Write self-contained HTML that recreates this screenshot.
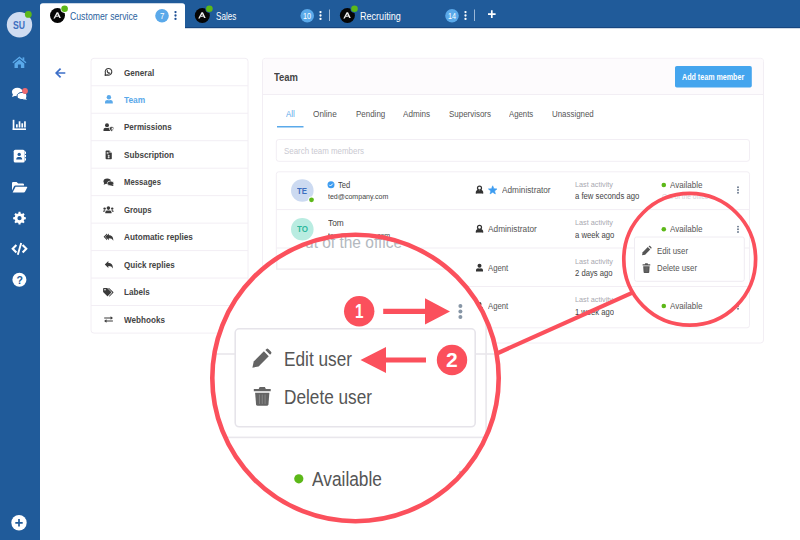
<!DOCTYPE html>
<html><head><meta charset="utf-8"><title>Team</title>
<style>
html,body{margin:0;padding:0;background:#fff;}
body{width:800px;height:540px;position:relative;overflow:hidden;font-family:'Liberation Sans',sans-serif;}
svg{position:absolute;left:0;top:0;}
.t{position:absolute;white-space:nowrap;line-height:1;transform-origin:0 50%;font-family:'Liberation Sans',sans-serif;}
#mag{position:absolute;left:0;top:0;width:800px;height:540px;clip-path:circle(144px at 355.5px 378px);}
</style></head><body>
<svg width="800" height="540" viewBox="0 0 800 540">
<rect x="0" y="0" width="800" height="540" fill="#fff"/>
<rect x="0" y="0" width="800" height="28" fill="#205b9a"/>
<rect x="40" y="27" width="760" height="1.2" fill="#174680"/>
<rect x="0" y="0" width="40" height="540" fill="#205b9a"/>
<path d="M40 29 V6 Q40 3.2 42.8 3.2 H182.2 Q185 3.2 185 6 V29 Z" fill="#fff"/>
<circle cx="19.5" cy="24.8" r="12.7" fill="#cfdcf1"/>
<circle cx="28.3" cy="14.4" r="3.4" fill="#5cb818"/>
<g transform="translate(57.5,15.5)"><circle r="7.5" fill="#050505"/>
<path transform="translate(-0.3,0.2) scale(0.88)" d="M-4.3 3.2 L-0.6 -3.8 L1.1 -3.8 L4.2 2.6 L2.3 2.6 L1.5 0.9 L-1.2 1.5 L-0.9 0.4 L1 -0.1 L0.2 -2 L-2.6 3.2 Z" fill="#fff" opacity="0.93"/>
<circle cx="7.1" cy="-6.7" r="4.1" fill="#fff"/><circle cx="7.1" cy="-6.7" r="3.3" fill="#5cb818"/></g>
<g transform="translate(202.3,15.5)"><circle r="7.5" fill="#050505"/>
<path transform="translate(-0.3,0.2) scale(0.88)" d="M-4.3 3.2 L-0.6 -3.8 L1.1 -3.8 L4.2 2.6 L2.3 2.6 L1.5 0.9 L-1.2 1.5 L-0.9 0.4 L1 -0.1 L0.2 -2 L-2.6 3.2 Z" fill="#fff" opacity="0.93"/>
<circle cx="7.1" cy="-6.7" r="4.1" fill="#205b9a"/><circle cx="7.1" cy="-6.7" r="3.3" fill="#5cb818"/></g>
<g transform="translate(347.4,15.5)"><circle r="7.5" fill="#050505"/>
<path transform="translate(-0.3,0.2) scale(0.88)" d="M-4.3 3.2 L-0.6 -3.8 L1.1 -3.8 L4.2 2.6 L2.3 2.6 L1.5 0.9 L-1.2 1.5 L-0.9 0.4 L1 -0.1 L0.2 -2 L-2.6 3.2 Z" fill="#fff" opacity="0.93"/>
<circle cx="7.1" cy="-6.7" r="4.1" fill="#205b9a"/><circle cx="7.1" cy="-6.7" r="3.3" fill="#5cb818"/></g>
<circle cx="162" cy="15.8" r="6.8" fill="#5aa9ea"/>
<circle cx="307.25" cy="15.8" r="6.8" fill="#5aa9ea"/>
<circle cx="452" cy="15.8" r="6.8" fill="#5aa9ea"/>
<circle cx="175.5" cy="12.1" r="1.15" fill="#1d4f95"/><circle cx="175.5" cy="15.5" r="1.15" fill="#1d4f95"/><circle cx="175.5" cy="18.9" r="1.15" fill="#1d4f95"/>
<circle cx="320.5" cy="12.1" r="1.15" fill="#fff"/><circle cx="320.5" cy="15.5" r="1.15" fill="#fff"/><circle cx="320.5" cy="18.9" r="1.15" fill="#fff"/>
<circle cx="465.5" cy="12.1" r="1.15" fill="#fff"/><circle cx="465.5" cy="15.5" r="1.15" fill="#fff"/><circle cx="465.5" cy="18.9" r="1.15" fill="#fff"/>
<rect x="329.1" y="9.5" width="0.9" height="11.5" fill="#a9c2de"/>
<rect x="474.1" y="9.5" width="0.9" height="11.5" fill="#a9c2de"/>
<path d="M488 14.1 H495.6 M491.8 10.3 V17.9" stroke="#fff" stroke-width="1.7"/>
<g transform="translate(12.4,57)" fill="#5aa9ea"><path d="M0 5.3 L7 -0.4 L14 5.3 L13.2 6.3 L7 1.3 L0.8 6.3 Z"/><path d="M2.1 6.4 L7 2.4 L11.9 6.4 V10.9 H8.5 V7.5 H5.5 V10.9 H2.1 Z"/><rect x="10.2" y="0.4" width="1.7" height="3"/></g>
<g fill="#fff"><ellipse cx="17.3" cy="92" rx="5.4" ry="4.2"/><path d="M13 94 L12.1 97 L16 95.6 Z"/><ellipse cx="22" cy="96" rx="5" ry="3.6" stroke="#205b9a" stroke-width="1"/><path d="M25.2 97.5 L27 99.8 L22.8 99.2 Z"/></g>
<circle cx="25" cy="91" r="2.9" fill="#ef6a6f"/>
<g fill="#fff"><rect x="12.7" y="119.8" width="1.7" height="10.2"/><rect x="12.7" y="128.4" width="13.3" height="1.6"/><rect x="16" y="124.3" width="1.7" height="3.2"/><rect x="18.7" y="121.3" width="1.7" height="6.2"/><rect x="21.4" y="123.3" width="1.7" height="4.2"/><rect x="24.1" y="121.3" width="1.7" height="6.2"/></g>
<g><rect x="13.7" y="149.7" width="11" height="12.8" rx="1.6" fill="#fff"/><rect x="25" y="151.6" width="1" height="2.3" fill="#fff"/><rect x="25" y="154.9" width="1" height="2.3" fill="#fff"/><rect x="25" y="158.2" width="1" height="2.3" fill="#fff"/><circle cx="19.2" cy="154.4" r="1.7" fill="#205b9a"/><path d="M16.2 159.6 C16.2 157.6 17.4 157 19.2 157 C21 157 22.2 157.6 22.2 159.6 Z" fill="#205b9a"/></g>
<g fill="#fff"><path d="M12 183.1 Q12 181.9 13.2 181.9 H16.6 L18.1 183.4 H22.8 Q24 183.4 24 184.6 V185.6 H15.6 Q14.4 185.6 13.9 186.6 L12 190.4 Z"/><path d="M15.6 186.7 H26.6 Q27.6 186.7 27.1 187.7 L25 191.8 Q24.6 192.5 23.7 192.5 H12.6 Z"/></g>
<path d="M24.26 217.02 L25.83 217.25 L25.83 219.15 L24.26 219.38 L23.70 220.73 L24.65 222.00 L23.30 223.35 L22.03 222.40 L20.68 222.96 L20.45 224.53 L18.55 224.53 L18.32 222.96 L16.97 222.40 L15.70 223.35 L14.35 222.00 L15.30 220.73 L14.74 219.38 L13.17 219.15 L13.17 217.25 L14.74 217.02 L15.30 215.67 L14.35 214.40 L15.70 213.05 L16.97 214.00 L18.32 213.44 L18.55 211.87 L20.45 211.87 L20.68 213.44 L22.03 214.00 L23.30 213.05 L24.65 214.40 L23.70 215.67Z M21.60 218.20 A2.1 2.1 0 1 0 17.40 218.20 A2.1 2.1 0 1 0 21.60 218.20Z" fill="#fff" fill-rule="evenodd"/>
<g fill="none" stroke="#fff" stroke-width="2.1" stroke-linejoin="miter"><path d="M16.4 245 L12.7 248.8 L16.4 252.6"/><path d="M22.6 245 L26.3 248.8 L22.6 252.6"/><path d="M21.2 243 L17.8 254.7" stroke-width="1.9"/></g>
<circle cx="19.4" cy="279.8" r="7" fill="#fff"/>
<circle cx="19" cy="522.8" r="7.7" fill="#fff"/><path d="M15.3 522.8 H22.7 M19 519.1 V526.5" stroke="#205b9a" stroke-width="1.7"/>
<path d="M65.3 73 H56.3 M60.6 68.6 L56.2 73 L60.6 77.4" fill="none" stroke="#3d6fc8" stroke-width="1.7" stroke-linejoin="miter"/>
<rect x="91" y="58.3" width="157" height="274.8" rx="3" fill="#fff" stroke="#f2eef4" stroke-width="1"/>
<rect x="91" y="85.27" width="157" height="1" fill="#f2eef4"/>
<rect x="91" y="112.74" width="157" height="1" fill="#f2eef4"/>
<rect x="91" y="140.21" width="157" height="1" fill="#f2eef4"/>
<rect x="91" y="167.68" width="157" height="1" fill="#f2eef4"/>
<rect x="91" y="195.15" width="157" height="1" fill="#f2eef4"/>
<rect x="91" y="222.62" width="157" height="1" fill="#f2eef4"/>
<rect x="91" y="250.09" width="157" height="1" fill="#f2eef4"/>
<rect x="91" y="277.56" width="157" height="1" fill="#f2eef4"/>
<rect x="91" y="305.03" width="157" height="1" fill="#f2eef4"/>
<path d="M105.1 75.4 L105.41 72.95 A3.3 3.3 0 1 1 107.35 74.89 Z" fill="none" stroke="#3c3c3c" stroke-width="1.1" stroke-linejoin="round"/><path d="M107.3 70.6 C107 72 108.3 73.4 109.8 73.1" fill="none" stroke="#3c3c3c" stroke-width="1.2" stroke-linecap="round"/>
<g transform="translate(108.9,99.3) scale(1.05)" fill="#5aa9ea"><circle cx="0" cy="-2" r="2.1"/>
<path d="M-3.7 4 V2.9 C-3.7 1.4 -2.6 0.6 -1.5 0.6 C-0.5 1 0.5 1 1.5 0.6 C2.6 0.6 3.7 1.4 3.7 2.9 V4 Z"/></g>
<g transform="translate(107,127.2) scale(0.95)" fill="#3a3a3a"><circle cx="0" cy="-2" r="2.1"/>
<path d="M-3.7 4 V2.9 C-3.7 1.4 -2.6 0.6 -1.5 0.6 C-0.5 1 0.5 1 1.5 0.6 C2.6 0.6 3.7 1.4 3.7 2.9 V4 Z"/></g>
<path d="M109.3 127.3 L111.6 126.4 L113.9 127.3 C113.9 129.4 113 130.8 111.6 131.5 C110.2 130.8 109.3 129.4 109.3 127.3 Z" fill="#3a3a3a" stroke="#fff" stroke-width="0.8"/><path d="M111.6 127.5 V130.4 C112.5 129.9 113 129 113 128 Z" fill="#fff"/>
<path d="M105.6 151.4 Q105.6 150.6 106.4 150.6 H109.4 L111.8 153 V158.4 Q111.8 159.2 111 159.2 H106.4 Q105.6 159.2 105.6 158.4 Z" fill="#3a3a3a"/><path d="M109.4 150.6 V153 H111.8" fill="#fff" opacity="0.55"/><rect x="106.7" y="152" width="1.8" height="0.7" fill="#fff"/><rect x="106.7" y="153.4" width="1.8" height="0.7" fill="#fff"/><path d="M108.7 154.8 V158.3 M107.7 155.7 H109.6 M107.7 157.4 H109.6" stroke="#fff" stroke-width="0.7" fill="none"/>
<g fill="#3a3a3a"><ellipse cx="107.2" cy="181.3" rx="3.7" ry="2.8"/><path d="M104.3 182.6 L103.7 184.8 L106.3 183.7 Z"/><ellipse cx="110.5" cy="183.4" rx="3.3" ry="2.4" stroke="#fff" stroke-width="0.7"/><path d="M112.4 184.6 L113.7 186 L110.9 185.7 Z"/></g>
<g fill="#3a3a3a"><circle cx="108.4" cy="208.1" r="1.8"/><path d="M105.3 213.2 V212.3 C105.3 211 106.4 210.4 107.2 210.4 H109.6 C110.4 210.4 111.5 211 111.5 212.3 V213.2 Z"/><circle cx="104.6" cy="208.6" r="1.2"/><circle cx="112.2" cy="208.6" r="1.2"/><path d="M103.1 211.8 C103.1 210.6 103.9 210.2 104.6 210.2 H105.6 C104.9 210.7 104.6 211.3 104.6 211.8 Z"/><path d="M113.7 211.8 C113.7 210.6 112.9 210.2 112.2 210.2 H111.2 C111.9 210.7 112.2 211.3 112.2 211.8 Z"/></g>
<path transform="translate(105.3,233.4) scale(0.98)" d="M0 3.4 L3.6 0 V2 C6.6 2 8.2 3.6 8.2 7.6 C7.3 5.8 6 5 3.6 5 V6.9 Z" fill="#3a3a3a"/>
<path d="M103.6 236.8 L107 233.5 V234.9 L105 236.8 L107 238.8 V240.2 Z" fill="#3a3a3a"/>
<path transform="translate(104.8,261.1) scale(0.99)" d="M0 3.4 L3.6 0 V2 C6.6 2 8.2 3.6 8.2 7.6 C7.3 5.8 6 5 3.6 5 V6.9 Z" fill="#3a3a3a"/>
<g fill="#3a3a3a"><path d="M103.1 288.7 Q103.1 287.9 103.9 287.9 H107.2 L111.2 291.9 Q111.6 292.3 111.2 292.7 L107.9 296 Q107.5 296.4 107.1 296 L103.1 292 Z"/><circle cx="105" cy="289.8" r="0.8" fill="#fff"/><path d="M109 287.9 L113.3 292 Q113.7 292.4 113.3 292.8 L109.6 296.4 L108.8 296.3 L112.3 292.4 L108 287.9 Z"/></g>
<g fill="#3a3a3a"><path d="M104.2 317.5 H110.6 V316.3 L113 318 L110.6 319.7 V318.5 H104.2 Z"/><path d="M112.9 320.5 H106.5 V319.3 L104.1 321 L106.5 322.7 V321.5 H112.9 Z"/></g>
<rect x="262.5" y="58.3" width="501" height="284.7" rx="3" fill="#fff" stroke="#f2eef4" stroke-width="1"/>
<path d="M263 94.5 V61 Q263 58.8 265.2 58.8 H760.8 Q763 58.8 763 61 V94.5 Z" fill="#fdfbfd"/>
<rect x="262.5" y="94" width="501" height="1" fill="#f2eef4"/>
<rect x="675" y="66" width="76.8" height="21.5" rx="1.8" fill="#44a5ee"/>
<rect x="277" y="126" width="26.5" height="1.5" fill="#5aa9ea"/>
<rect x="276.3" y="139.5" width="473.2" height="21.8" rx="2.5" fill="#fff" stroke="#f2eef4" stroke-width="1"/>
<rect x="276.3" y="171.8" width="473.2" height="156" rx="2.5" fill="#fff" stroke="#f2eef4" stroke-width="1"/>
<rect x="276.3" y="209.1" width="473.2" height="1" fill="#f2eef4"/>
<rect x="276.3" y="247.5" width="473.2" height="1" fill="#f2eef4"/>
<rect x="276.3" y="286.0" width="473.2" height="1" fill="#f2eef4"/>
<circle cx="302.3" cy="190.5" r="11.3" fill="#ccdaf1"/><circle cx="311.5" cy="199.8" r="3.2" fill="#fff"/><circle cx="311.5" cy="199.8" r="2.4" fill="#5cb818"/>
<circle cx="302.3" cy="229.3" r="11.3" fill="#b9ece1"/>
<circle cx="331" cy="184.7" r="3.5" fill="#3d9cf0"/><path d="M329.3 184.8 L330.5 186 L332.8 183.6" fill="none" stroke="#fff" stroke-width="1"/>
<g transform="translate(479.5,189.8)" fill="none" stroke="#333" stroke-width="1.25">
<circle cx="0" cy="-1.7" r="2"/><path d="M-3.2 3.6 C-3.2 1.2 -1.8 0.6 -1.2 0.6 L0 2 L1.2 0.6 C1.8 0.6 3.2 1.2 3.2 3.6" stroke-linejoin="round" fill="#333" /></g>
<polygon points="492.70,185.80 493.88,188.68 496.98,188.91 494.60,190.92 495.35,193.94 492.70,192.30 490.05,193.94 490.80,190.92 488.42,188.91 491.52,188.68" fill="#3d9cf0" stroke="#3d9cf0" stroke-width="0.6" stroke-linejoin="round"/>
<g transform="translate(479.5,229)" fill="none" stroke="#333" stroke-width="1.25">
<circle cx="0" cy="-1.7" r="2"/><path d="M-3.2 3.6 C-3.2 1.2 -1.8 0.6 -1.2 0.6 L0 2 L1.2 0.6 C1.8 0.6 3.2 1.2 3.2 3.6" stroke-linejoin="round" fill="#333" /></g>
<g transform="translate(479.5,267.6) scale(0.95)" fill="#333"><circle cx="0" cy="-2" r="2.1"/>
<path d="M-3.7 4 V2.9 C-3.7 1.4 -2.6 0.6 -1.5 0.6 C-0.5 1 0.5 1 1.5 0.6 C2.6 0.6 3.7 1.4 3.7 2.9 V4 Z"/></g>
<g transform="translate(479.5,306) scale(0.95)" fill="#333"><circle cx="0" cy="-2" r="2.1"/>
<path d="M-3.7 4 V2.9 C-3.7 1.4 -2.6 0.6 -1.5 0.6 C-0.5 1 0.5 1 1.5 0.6 C2.6 0.6 3.7 1.4 3.7 2.9 V4 Z"/></g>
<circle cx="663.8" cy="185" r="2.3" fill="#5cb818"/>
<circle cx="663.8" cy="229.2" r="2.3" fill="#5cb818"/>
<circle cx="663.8" cy="306" r="2.3" fill="#5cb818"/>
<circle cx="738" cy="187.3" r="0.95" fill="#66758a"/><circle cx="738" cy="190" r="0.95" fill="#66758a"/><circle cx="738" cy="192.7" r="0.95" fill="#66758a"/>
<circle cx="738" cy="226.60000000000002" r="0.95" fill="#66758a"/><circle cx="738" cy="229.3" r="0.95" fill="#66758a"/><circle cx="738" cy="232.0" r="0.95" fill="#66758a"/>
<circle cx="738" cy="303.3" r="0.95" fill="#66758a"/><circle cx="738" cy="306" r="0.95" fill="#66758a"/><circle cx="738" cy="308.7" r="0.95" fill="#66758a"/>
<rect x="634.5" y="237" width="109.8" height="44.3" rx="2" fill="#fff" stroke="#efecf2" stroke-width="1"/>
<g transform="translate(642,245.8) scale(0.95)" fill="#555"><path d="M0 10 L0.7 6.7 L6.1 1.3 L8.7 3.9 L3.3 9.3 Z"/><path d="M6.9 0.6 L7.5 0 Q8 -0.4 8.6 0.2 L9.8 1.4 Q10.4 2 10 2.5 L9.4 3.1 Z"/></g>
<g transform="translate(642.6,263.3) scale(0.85,0.96)" fill="#555"><path d="M0 1 H2.6 L3.1 0 H5.9 L6.4 1 H9 V2.2 H0 Z"/><path d="M0.7 3 H8.3 L7.8 9.2 Q7.7 10 6.9 10 H2.1 Q1.3 10 1.2 9.2 Z"/><path d="M3 4 V9 M4.5 4 V9 M6 4 V9" stroke="#fff" stroke-width="0.4" opacity="0.3" fill="none"/></g>
</svg>
<span class="t" style="left:16.6px;top:274.6px;font-size:10.5px;font-weight:700;color:#205b9a">?</span>
<span class='t' style='left:70.30px;top:10.67px;font-size:10.5px;font-weight:400;color:#2a5f9e;transform:scaleX(0.8286)'>Customer service</span>
<span class='t' style='left:215.50px;top:10.67px;font-size:10.5px;font-weight:400;color:#fff;transform:scaleX(0.7710)'>Sales</span>
<span class='t' style='left:360.25px;top:10.67px;font-size:10.5px;font-weight:400;color:#fff;transform:scaleX(0.8619)'>Recruiting</span>
<span class='t' style='left:159.80px;top:12.89px;font-size:8.2px;font-weight:400;color:#fff;transform:scaleX(0.9644)'>7</span>
<span class='t' style='left:303.20px;top:12.89px;font-size:8.2px;font-weight:400;color:#fff;transform:scaleX(0.8892)'>10</span>
<span class='t' style='left:448.00px;top:12.89px;font-size:8.2px;font-weight:400;color:#fff;transform:scaleX(0.8782)'>14</span>
<span class='t' style='left:13.40px;top:19.72px;font-size:10.8px;font-weight:700;color:#3d6fc0;transform:scaleX(0.8000)'>SU</span>
<span class='t' style='left:124.30px;top:67.81px;font-size:9.6px;font-weight:700;color:#444;transform:scaleX(0.8451)'>General</span>
<span class='t' style='left:124.30px;top:94.81px;font-size:9.6px;font-weight:700;color:#5aa9ea;transform:scaleX(0.8703)'>Team</span>
<span class='t' style='left:124.30px;top:121.61px;font-size:9.6px;font-weight:700;color:#444;transform:scaleX(0.8359)'>Permissions</span>
<span class='t' style='left:124.30px;top:150.01px;font-size:9.6px;font-weight:700;color:#444;transform:scaleX(0.8518)'>Subscription</span>
<span class='t' style='left:124.30px;top:176.51px;font-size:9.6px;font-weight:700;color:#444;transform:scaleX(0.8054)'>Messages</span>
<span class='t' style='left:124.30px;top:205.01px;font-size:9.6px;font-weight:700;color:#444;transform:scaleX(0.8117)'>Groups</span>
<span class='t' style='left:124.30px;top:231.51px;font-size:9.6px;font-weight:700;color:#444;transform:scaleX(0.8564)'>Automatic replies</span>
<span class='t' style='left:124.30px;top:260.01px;font-size:9.6px;font-weight:700;color:#444;transform:scaleX(0.8413)'>Quick replies</span>
<span class='t' style='left:124.30px;top:286.51px;font-size:9.6px;font-weight:700;color:#444;transform:scaleX(0.8452)'>Labels</span>
<span class='t' style='left:124.30px;top:315.01px;font-size:9.6px;font-weight:700;color:#444;transform:scaleX(0.8471)'>Webhooks</span>
<span class='t' style='left:274.00px;top:72.33px;font-size:11px;font-weight:700;color:#444;transform:scaleX(0.8595)'>Team</span>
<span class='t' style='left:682.30px;top:72.55px;font-size:8.7px;font-weight:700;color:#fff;transform:scaleX(0.8206)'>Add team member</span>
<span class='t' style='left:285.75px;top:110.46px;font-size:9.3px;font-weight:400;color:#5aa9ea;transform:scaleX(0.8459)'>All</span>
<span class='t' style='left:313.00px;top:110.46px;font-size:9.3px;font-weight:400;color:#555;transform:scaleX(0.8837)'>Online</span>
<span class='t' style='left:355.50px;top:110.46px;font-size:9.3px;font-weight:400;color:#555;transform:scaleX(0.8571)'>Pending</span>
<span class='t' style='left:403.00px;top:110.46px;font-size:9.3px;font-weight:400;color:#555;transform:scaleX(0.8705)'>Admins</span>
<span class='t' style='left:448.50px;top:110.46px;font-size:9.3px;font-weight:400;color:#555;transform:scaleX(0.8555)'>Supervisors</span>
<span class='t' style='left:509.00px;top:110.46px;font-size:9.3px;font-weight:400;color:#555;transform:scaleX(0.8376)'>Agents</span>
<span class='t' style='left:551.75px;top:110.46px;font-size:9.3px;font-weight:400;color:#555;transform:scaleX(0.8501)'>Unassigned</span>
<span class='t' style='left:284.25px;top:147.40px;font-size:8.8px;font-weight:400;color:#c9c9d1;transform:scaleX(0.8990)'>Search team members</span>
<span class='t' style='left:297.30px;top:187.30px;font-size:8.8px;font-weight:700;color:#3d6fc0;transform:scaleX(0.8889)'>TE</span>
<span class='t' style='left:296.80px;top:225.00px;font-size:8.8px;font-weight:700;color:#2db89c;transform:scaleX(0.9119)'>TO</span>
<span class='t' style='left:337.75px;top:181.16px;font-size:9.3px;font-weight:400;color:#444;transform:scaleX(0.8167)'>Ted</span>
<span class='t' style='left:327.75px;top:193.04px;font-size:7.9px;font-weight:400;color:#444;transform:scaleX(0.8924)'>ted@company.com</span>
<span class='t' style='left:327.75px;top:218.76px;font-size:9.3px;font-weight:400;color:#444;transform:scaleX(0.8960)'>Tom</span>
<span class='t' style='left:327.75px;top:231.64px;font-size:7.9px;font-weight:400;color:#444;transform:scaleX(0.8931)'>tom@company.com</span>
<span class='t' style='left:502.40px;top:186.11px;font-size:9.2px;font-weight:400;color:#555;transform:scaleX(0.8979)'>Administrator</span>
<span class='t' style='left:488.00px;top:224.71px;font-size:9.2px;font-weight:400;color:#555;transform:scaleX(0.9016)'>Administrator</span>
<span class='t' style='left:488.00px;top:264.11px;font-size:9.2px;font-weight:400;color:#555;transform:scaleX(0.8432)'>Agent</span>
<span class='t' style='left:488.00px;top:301.51px;font-size:9.2px;font-weight:400;color:#555;transform:scaleX(0.8432)'>Agent</span>
<span class='t' style='left:574.50px;top:180.59px;font-size:7.6px;font-weight:400;color:#a9a9b1;transform:scaleX(0.9579)'>Last activity</span>
<span class='t' style='left:574.50px;top:219.09px;font-size:7.6px;font-weight:400;color:#a9a9b1;transform:scaleX(0.9579)'>Last activity</span>
<span class='t' style='left:574.50px;top:257.59px;font-size:7.6px;font-weight:400;color:#a9a9b1;transform:scaleX(0.9579)'>Last activity</span>
<span class='t' style='left:574.50px;top:295.89px;font-size:7.6px;font-weight:400;color:#a9a9b1;transform:scaleX(0.9579)'>Last activity</span>
<span class='t' style='left:574.50px;top:191.71px;font-size:9.2px;font-weight:400;color:#444;transform:scaleX(0.8385)'>a few seconds ago</span>
<span class='t' style='left:574.50px;top:231.11px;font-size:9.2px;font-weight:400;color:#444;transform:scaleX(0.8351)'>a week ago</span>
<span class='t' style='left:574.50px;top:268.51px;font-size:9.2px;font-weight:400;color:#444;transform:scaleX(0.8342)'>2 days ago</span>
<span class='t' style='left:574.50px;top:308.31px;font-size:9.2px;font-weight:400;color:#444;transform:scaleX(0.8298)'>1 week ago</span>
<span class='t' style='left:669.50px;top:180.51px;font-size:9.2px;font-weight:400;color:#555;transform:scaleX(0.8754)'>Available</span>
<span class='t' style='left:661.50px;top:193.19px;font-size:7.6px;font-weight:400;color:#d2d2d8;transform:scaleX(0.8694)'>Out of the office</span>
<span class='t' style='left:669.50px;top:224.71px;font-size:9.2px;font-weight:400;color:#555;transform:scaleX(0.8754)'>Available</span>
<span class='t' style='left:669.50px;top:301.51px;font-size:9.2px;font-weight:400;color:#555;transform:scaleX(0.8754)'>Available</span>
<span class='t' style='left:657.00px;top:247.40px;font-size:8.8px;font-weight:400;color:#555;transform:scaleX(0.8929)'>Edit user</span>
<span class='t' style='left:657.00px;top:264.20px;font-size:8.8px;font-weight:400;color:#555;transform:scaleX(0.8889)'>Delete user</span>
<svg width="800" height="540" viewBox="0 0 800 540">
<line x1="497" y1="353.5" x2="632" y2="292.8" stroke="#fb505c" stroke-width="4.2"/>
<circle cx="689.7" cy="259.3" r="65.9" fill="none" stroke="#fb505c" stroke-width="3.7"/>
<circle cx="355.5" cy="378" r="145" fill="#fff"/>
</svg>
<div id="mag">
<svg width="800" height="540" viewBox="0 0 800 540">
<rect x="276" y="268.4" width="196" height="1.4" fill="#efedf1"/><rect x="276" y="225" width="1.4" height="44" fill="#efedf1"/>
<rect x="200" y="353.2" width="300" height="1.6" fill="#e9e7ec"/>
<rect x="200" y="436.6" width="300" height="1.6" fill="#e9e7ec"/>
<rect x="485.3" y="200" width="1.6" height="340" fill="#e9e7ec"/>
<rect x="235.2" y="328.8" width="240" height="98" rx="4" fill="#fff" stroke="#e6e4ea" stroke-width="1.6"/>
<g transform="translate(252.4,348.9) scale(1.88)" fill="#646464"><path d="M0 10 L0.7 6.7 L6.1 1.3 L8.7 3.9 L3.3 9.3 Z"/><path d="M6.9 0.6 L7.5 0 Q8 -0.4 8.6 0.2 L9.8 1.4 Q10.4 2 10 2.5 L9.4 3.1 Z"/></g>
<g transform="translate(253.8,387) scale(1.88)" fill="#646464"><path d="M0 1 H2.6 L3.1 0 H5.9 L6.4 1 H9 V2.2 H0 Z"/><path d="M0.7 3 H8.3 L7.8 9.2 Q7.7 10 6.9 10 H2.1 Q1.3 10 1.2 9.2 Z"/><path d="M3 4 V9 M4.5 4 V9 M6 4 V9" stroke="#fff" stroke-width="0.4" opacity="0.3" fill="none"/></g>
<circle cx="460.4" cy="305.9" r="2.0" fill="#8796a6"/><circle cx="460.4" cy="311.5" r="2.0" fill="#8796a6"/><circle cx="460.4" cy="317.1" r="2.0" fill="#8796a6"/>
<circle cx="460.4" cy="472.4" r="1.6" fill="#c5ccd4"/><circle cx="460.4" cy="478" r="1.6" fill="#c5ccd4"/><circle cx="460.4" cy="483.6" r="1.6" fill="#c5ccd4"/>
<circle cx="298.8" cy="478.8" r="4.6" fill="#5cb818"/>
<circle cx="359.2" cy="311.3" r="15.2" fill="#fb505c"/><circle cx="452" cy="360" r="15.2" fill="#fb505c"/>
<path d="M383.2 308.8 H425 V298.3 L450 311.4 L425 324.5 V314 H383.2 Z" fill="#fb505c"/>
<path d="M426 357.4 H386 V347 L360.5 360 L386 373 V362.6 H426 Z" fill="#fb505c"/>
</svg>
<span class='t' style='left:293.00px;top:235.09px;font-size:16.8px;font-weight:400;color:#b3b8be;transform:scaleX(0.9224)'>Out of the office</span>
<span class='t' style='left:284.00px;top:350.37px;font-size:19.3px;font-weight:400;color:#555;transform:scaleX(0.8936)'>Edit user</span>
<span class='t' style='left:284.00px;top:388.37px;font-size:19.3px;font-weight:400;color:#555;transform:scaleX(0.8924)'>Delete user</span>
<span class='t' style='left:312.00px;top:470.37px;font-size:19.3px;font-weight:400;color:#555;transform:scaleX(0.8985)'>Available</span>
<span class='t' style='left:354.50px;top:300.14px;font-size:21px;font-weight:700;color:#fff;transform:scaleX(0.7273)'>1</span>
<span class='t' style='left:446.30px;top:348.94px;font-size:21px;font-weight:700;color:#fff;transform:scaleX(1.0011)'>2</span>
</div>
<svg width="800" height="540" viewBox="0 0 800 540">
<circle cx="355.5" cy="378" r="143.2" fill="none" stroke="#fb505c" stroke-width="4.6"/>
</svg>
</body></html>
